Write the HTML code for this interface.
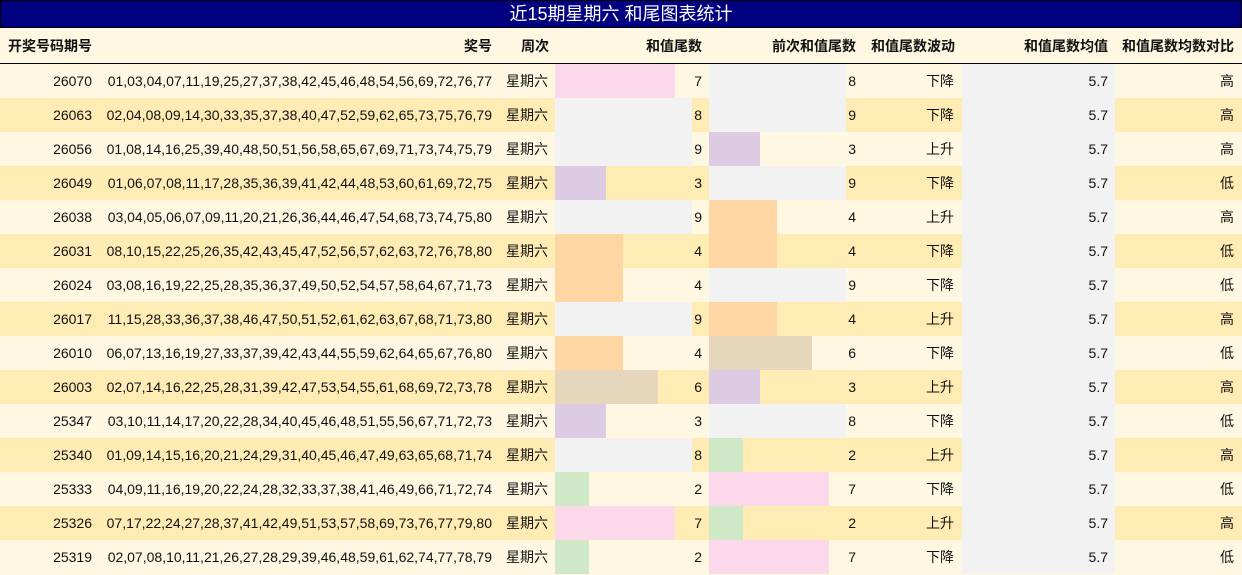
<!DOCTYPE html>
<html><head><meta charset="utf-8"><style>
*{margin:0;padding:0;box-sizing:border-box}
body{width:1242px;height:575px;overflow:hidden;background:#fef7e1;font-family:"Liberation Sans","Noto Sans CJK SC",sans-serif;font-size:14px;color:#111}
.t{position:absolute;left:0;top:0;width:1242px;height:28px;background:#000080;border:1px solid #000;color:#fff;font-size:18px;text-align:center;line-height:27px}
.h{position:absolute;left:0;top:28px;width:1242px;height:36px;background:#fef7e1;border-bottom:1px solid #000;font-weight:bold}
.r{position:absolute;left:0;width:1242px;height:34px}
.c{position:absolute;top:0;height:100%;line-height:34px;white-space:nowrap;text-align:right;padding-right:6px}
.h .c{line-height:36px}
.b{position:absolute;top:0;height:34px}
</style></head><body>
<div class="t">近15期星期六 和尾图表统计</div>
<div class="h">
<div class="c" style="left:0;width:100px;text-align:left;padding-left:8px">开奖号码期号</div>
<div class="c" style="left:100px;width:398px">奖号</div>
<div class="c" style="left:498px;width:57px">周次</div>
<div class="c" style="left:555px;width:154px;padding-right:7px">和值尾数</div>
<div class="c" style="left:709px;width:154px;padding-right:7px">前次和值尾数</div>
<div class="c" style="left:863px;width:99px;padding-right:7px">和值尾数波动</div>
<div class="c" style="left:962px;width:153px;padding-right:7px">和值尾数均值</div>
<div class="c" style="left:1115px;width:127px;padding-right:8px">和值尾数均数对比</div>
</div>
<div id="rows"></div>
<script>
var d=[
["26070","01,03,04,07,11,19,25,27,37,38,42,45,46,48,54,56,69,72,76,77",7,8,"下降","高"],
["26063","02,04,08,09,14,30,33,35,37,38,40,47,52,59,62,65,73,75,76,79",8,9,"下降","高"],
["26056","01,08,14,16,25,39,40,48,50,51,56,58,65,67,69,71,73,74,75,79",9,3,"上升","高"],
["26049","01,06,07,08,11,17,28,35,36,39,41,42,44,48,53,60,61,69,72,75",3,9,"下降","低"],
["26038","03,04,05,06,07,09,11,20,21,26,36,44,46,47,54,68,73,74,75,80",9,4,"上升","高"],
["26031","08,10,15,22,25,26,35,42,43,45,47,52,56,57,62,63,72,76,78,80",4,4,"下降","低"],
["26024","03,08,16,19,22,25,28,35,36,37,49,50,52,54,57,58,64,67,71,73",4,9,"下降","低"],
["26017","11,15,28,33,36,37,38,46,47,50,51,52,61,62,63,67,68,71,73,80",9,4,"上升","高"],
["26010","06,07,13,16,19,27,33,37,39,42,43,44,55,59,62,64,65,67,76,80",4,6,"下降","低"],
["26003","02,07,14,16,22,25,28,31,39,42,47,53,54,55,61,68,69,72,73,78",6,3,"上升","高"],
["25347","03,10,11,14,17,20,22,28,34,40,45,46,48,51,55,56,67,71,72,73",3,8,"下降","低"],
["25340","01,09,14,15,16,20,21,24,29,31,40,45,46,47,49,63,65,68,71,74",8,2,"上升","高"],
["25333","04,09,11,16,19,20,22,24,28,32,33,37,38,41,46,49,66,71,72,74",2,7,"下降","低"],
["25326","07,17,22,24,27,28,37,41,42,49,51,53,57,58,69,73,76,77,79,80",7,2,"上升","高"],
["25319","02,07,08,10,11,21,26,27,28,29,39,46,48,59,61,62,74,77,78,79",2,7,"下降","低"]];
var col={2:"#cfe9c7",3:"#ddcbe4",4:"#fdd6a4",6:"#e6d6bb",7:"#fbd9ea",8:"#f2f2f2",9:"#f2f2f2"};
var h="";
d.forEach(function(r,i){
var bg=i%2?"#feecb4":"#fef7e1";
var w1=Math.min(r[2],8)*17+(r[2]>=6?1:0),w2=Math.min(r[3],8)*17+(r[3]>=6?1:0);
h+='<div class="r" style="top:'+(64+i*34)+'px;background:'+bg+'">'+
'<div class="c" style="left:0;width:100px;padding-right:8px">'+r[0]+'</div>'+
'<div class="c" style="left:100px;width:398px">'+r[1]+'</div>'+
'<div class="c" style="left:498px;width:57px;padding-right:7px">星期六</div>'+
'<div class="b" style="left:555px;width:'+w1+'px;background:'+col[r[2]]+'"></div>'+
'<div class="c" style="left:555px;width:154px;padding-right:7px">'+r[2]+'</div>'+
'<div class="b" style="left:709px;width:'+w2+'px;background:'+col[r[3]]+'"></div>'+
'<div class="c" style="left:709px;width:154px;padding-right:7px">'+r[3]+'</div>'+
'<div class="c" style="left:863px;width:99px;padding-right:8px">'+r[4]+'</div>'+
'<div class="c" style="left:962px;width:153px;background:#f2f2f2;padding-right:7px">5.7</div>'+
'<div class="c" style="left:1115px;width:125px">'+r[5]+'</div>'+
'</div>';});
document.getElementById("rows").innerHTML=h;
</script>
</body></html>
